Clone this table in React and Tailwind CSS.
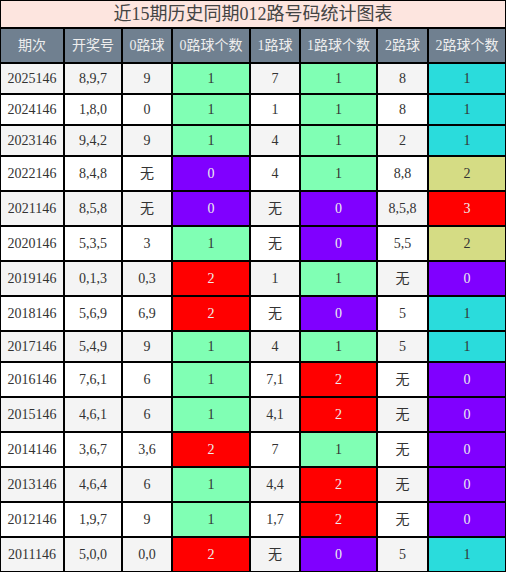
import React from 'react';

const cols = 'grid grid-cols-[64px_58px_50px_78px_50px_77px_51px_78px]';

const colors = {
  g: 'bg-[#80ffb4] text-[#333]',
  c: 'bg-[#2adcdc] text-[#333]',
  y: 'bg-[#d5dc84] text-[#333]',
  p: 'bg-[#8000ff] text-[#eee]',
  r: 'bg-[#ff0000] text-[#eee]',
};

const rows = [
  ['2025146', '8,9,7', '9', '1g', '7', '1g', '8', '1c'],
  ['2024146', '1,8,0', '0', '1g', '1', '1g', '8', '1c'],
  ['2023146', '9,4,2', '9', '1g', '4', '1g', '2', '1c'],
  ['2022146', '8,4,8', '无', '0p', '4', '1g', '8,8', '2y'],
  ['2021146', '8,5,8', '无', '0p', '无', '0p', '8,5,8', '3r'],
  ['2020146', '5,3,5', '3', '1g', '无', '0p', '5,5', '2y'],
  ['2019146', '0,1,3', '0,3', '2r', '1', '1g', '无', '0p'],
  ['2018146', '5,6,9', '6,9', '2r', '无', '0p', '5', '1c'],
  ['2017146', '5,4,9', '9', '1g', '4', '1g', '5', '1c'],
  ['2016146', '7,6,1', '6', '1g', '7,1', '2r', '无', '0p'],
  ['2015146', '4,6,1', '6', '1g', '4,1', '2r', '无', '0p'],
  ['2014146', '3,6,7', '3,6', '2r', '7', '1g', '无', '0p'],
  ['2013146', '4,6,4', '6', '1g', '4,4', '2r', '无', '0p'],
  ['2012146', '1,9,7', '9', '1g', '1,7', '2r', '无', '0p'],
  ['2011146', '5,0,0', '0,0', '2r', '无', '0p', '5', '1c'],
];

const heads = ['期次', '开奖号', '0路球', '0路球个数', '1路球', '1路球个数', '2路球', '2路球个数'];

export default function App() {
  return (
    <div className="w-[506px] bg-white text-[14px] text-[#333] font-['Liberation_Serif','Noto_Sans_CJK_SC',serif]">
      <div className="h-[28px] border border-black bg-[#fde5df] flex items-center justify-center text-[18px] text-[#444]">
        近15期历史同期012路号码统计图表
      </div>
      <div className={`${cols} h-[35px]`}>
        {heads.map((h) => (
          <div key={h} className="border border-black bg-[#708090] text-[#eee] flex items-center justify-center">
            {h}
          </div>
        ))}
      </div>
      {rows.map((r, i) => {
        const tall = r.includes('无');
        const bg = i % 2 === 0 ? 'bg-[#f4f4f4]' : 'bg-white';
        return (
          <div key={r[0]} className={`${cols} ${tall ? 'h-[35px]' : 'h-[31px]'}`}>
            {r.map((v, j) => {
              const count = j === 3 || j === 5 || j === 7;
              const cls = count ? colors[v[1]] : bg;
              return (
                <div key={j} className={`border border-black flex items-center justify-center ${cls}`}>
                  {count ? v[0] : v}
                </div>
              );
            })}
          </div>
        );
      })}
    </div>
  );
}
